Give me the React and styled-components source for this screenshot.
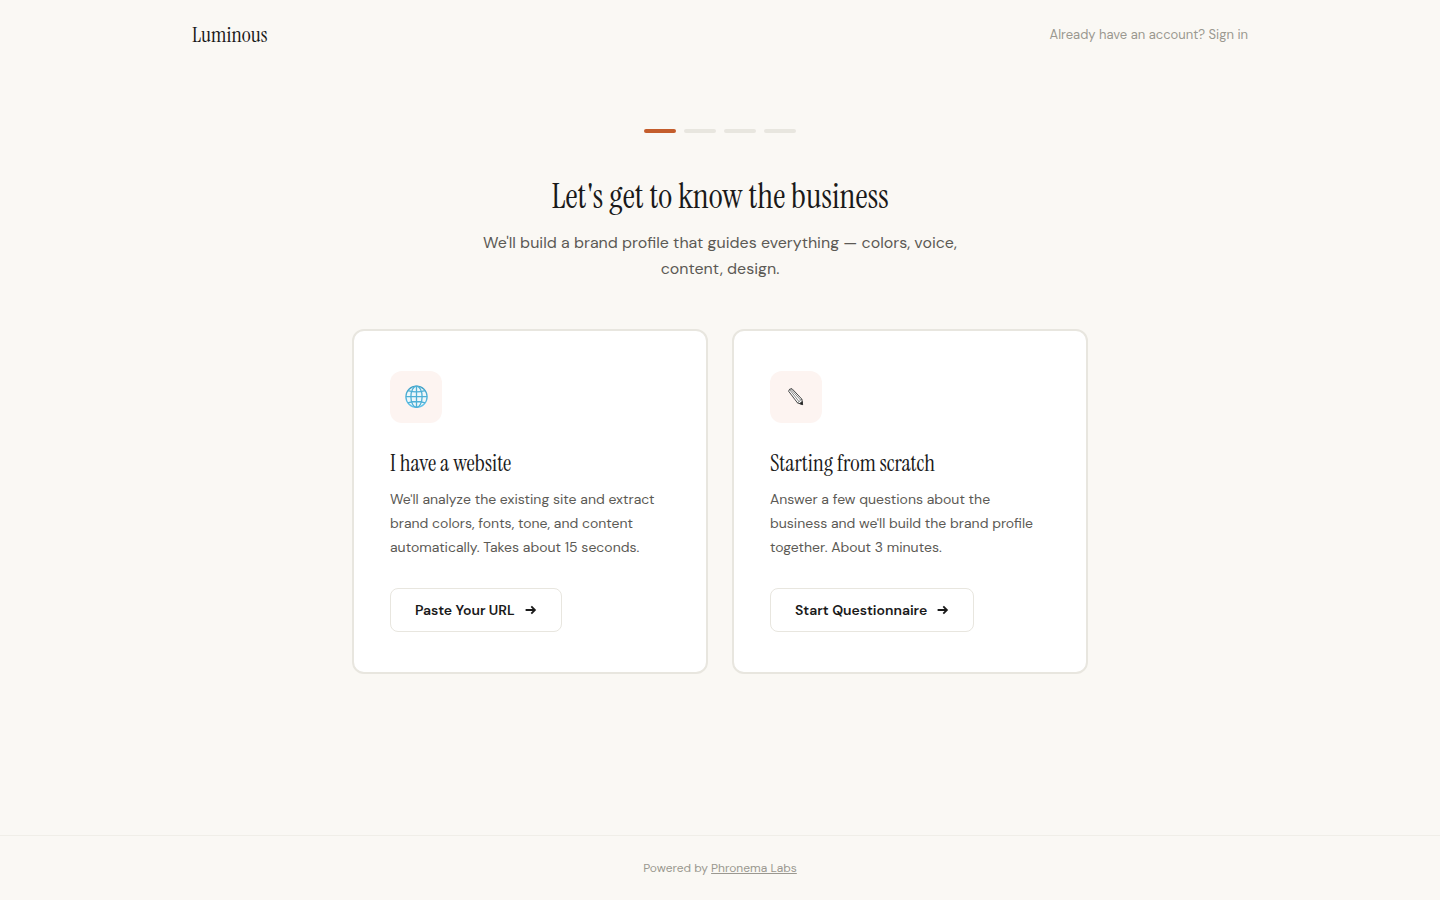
import React from "react";
import styled, { createGlobalStyle } from "styled-components";

const sans = `"DM Sans", "Open Sans", "Noto Sans", sans-serif`;
const serif = `"Instrument Serif", "Liberation Serif", serif`;

const GlobalStyle = createGlobalStyle`
  *, *::before, *::after { box-sizing: border-box; }
  body {
    margin: 0;
    background: #faf8f4;
    color: #1a1a1a;
    font-family: ${sans};
  }
  h1, h2, p, ol { margin: 0; padding: 0; }
`;

const Page = styled.div`
  min-height: 100vh;
  display: flex;
  flex-direction: column;
`;

const Header = styled.header`
  width: 100%;
  max-width: 1120px;
  margin: 0 auto;
  padding: 20px 32px;
  display: flex;
  align-items: center;
  justify-content: space-between;
`;

const Logo = styled.a`
  font-family: ${serif};
  font-size: 22px;
  line-height: 29px;
  color: #1a1a1a;
  text-decoration: none;
`;

const SignIn = styled.a`
  font-size: 13px;
  line-height: 20px;
  color: #9b9890;
  text-decoration: none;
`;

const Main = styled.main`
  flex: 1;
  width: 100%;
  max-width: 800px;
  margin: 0 auto;
  padding: 60px 32px;
`;

const Steps = styled.ol`
  list-style: none;
  display: flex;
  justify-content: center;
  gap: 8px;
  margin-bottom: 40px;
`;

const Step = styled.li`
  width: 32px;
  height: 4px;
  border-radius: 2px;
  background: ${(p) => (p.$active ? "#c45d2c" : "#e8e6df")};
`;

const Intro = styled.div`
  max-width: 480px;
  margin: 0 auto 47px;
  text-align: center;
`;

const Title = styled.h1`
  font-family: ${serif};
  font-size: 34px;
  font-weight: 400;
  line-height: 48px;
  margin-bottom: 9px;
`;

const Lead = styled.p`
  font-size: 16px;
  line-height: 26px;
  color: #5c5a55;
`;

const Cards = styled.div`
  display: grid;
  grid-template-columns: repeat(auto-fit, minmax(300px, 1fr));
  gap: 24px;
`;

const Card = styled.section`
  display: flex;
  flex-direction: column;
  align-items: flex-start;
  padding: 40px 36px;
  background: #fff;
  border: 2px solid #e8e6df;
  border-radius: 12px;
`;

const IconTile = styled.span`
  width: 52px;
  height: 52px;
  border-radius: 12px;
  background: #fdf4f1;
  display: flex;
  align-items: center;
  justify-content: center;
  margin-bottom: 24px;
`;

const CardTitle = styled.h2`
  font-family: ${serif};
  font-size: 23px;
  font-weight: 400;
  line-height: 32px;
  margin-bottom: 8px;
`;

const CardText = styled.p`
  font-size: 14px;
  line-height: 24px;
  color: #5c5a55;
  margin-bottom: 29px;
`;

const Button = styled.button`
  height: 44px;
  padding: 0 24px;
  display: inline-flex;
  align-items: center;
  gap: 10px;
  font: 600 14px ${sans};
  color: #1a1a1a;
  background: #fff;
  border: 1px solid #e8e6df;
  border-radius: 8px;
  cursor: pointer;
`;

const Footer = styled.footer`
  border-top: 1px solid #f0eee8;
  padding: 22px 32px;
  text-align: center;
  font-size: 12px;
  line-height: 20px;
  color: #9b9890;

  a { color: inherit; }
`;

const Arrow = () => (
  <svg width="12" height="12" viewBox="0 0 12 12" fill="none" stroke="currentColor" strokeWidth="1.8" aria-hidden="true">
    <path d="M0.6 6H9.8M6.3 2.4L9.9 6L6.3 9.6" />
  </svg>
);

const Globe = () => (
  <svg width="26" height="26" viewBox="0 0 26 26" fill="none" strokeWidth="1.3">
    <defs>
      <linearGradient id="globe-sea" x1="0" y1="0" x2="0" y2="1">
        <stop offset="0" stopColor="#3f9fc4" />
        <stop offset="1" stopColor="#62c4ec" />
      </linearGradient>
    </defs>
    <circle cx="13.5" cy="12.7" r="10.6" fill="#eef7fa" stroke="url(#globe-sea)" />
    <g stroke="#4fb0d6">
      <ellipse cx="13.5" cy="12.7" rx="5.6" ry="10.6" />
      <path d="M13.5 2.1V23.3M2.9 12.7H24.1M5 6.6Q13.5 9.2 22 6.6M5 18.8Q13.5 16.2 22 18.8" />
    </g>
  </svg>
);

const Pencil = () => (
  <svg width="26" height="26" viewBox="0 0 26 26" fill="none" stroke="#333" strokeWidth="0.9" strokeLinejoin="round">
    <path d="M5.6 7.2Q5.9 4.6 8.9 4.6L18.9 15.2L19.6 20.6L14.5 18.9Z" fill="#fff" />
    <path d="M6.6 5.6L16 17.6M7.7 5L17.6 16.1M14.5 18.9L16 17.6L17.6 16.1L18.9 15.2" strokeWidth="0.6" />
    <path d="M16.6 19.5L19.3 17.6L19.6 20.6Z" fill="#1a1a1a" />
  </svg>
);

const options = [
  {
    Icon: Globe,
    title: "I have a website",
    text: "We'll analyze the existing site and extract brand colors, fonts, tone, and content automatically. Takes about 15 seconds.",
    action: "Paste Your URL",
  },
  {
    Icon: Pencil,
    title: "Starting from scratch",
    text: "Answer a few questions about the business and we'll build the brand profile together. About 3 minutes.",
    action: "Start Questionnaire",
  },
];

export default function App() {
  return (
    <Page>
      <GlobalStyle />
      <Header>
        <Logo href="#">Luminous</Logo>
        <SignIn href="#">Already have an account? Sign in</SignIn>
      </Header>
      <Main>
        <Steps>
          {[1, 2, 3, 4].map((n) => (
            <Step key={n} $active={n === 1} />
          ))}
        </Steps>
        <Intro>
          <Title>Let's get to know the business</Title>
          <Lead>We'll build a brand profile that guides everything — colors, voice, content, design.</Lead>
        </Intro>
        <Cards>
          {options.map(({ Icon, title, text, action }) => (
            <Card key={title}>
              <IconTile aria-hidden="true">
                <Icon />
              </IconTile>
              <CardTitle>{title}</CardTitle>
              <CardText>{text}</CardText>
              <Button type="button">
                {action}
                <Arrow />
              </Button>
            </Card>
          ))}
        </Cards>
      </Main>
      <Footer>
        Powered by <a href="#">Phronema Labs</a>
      </Footer>
    </Page>
  );
}
